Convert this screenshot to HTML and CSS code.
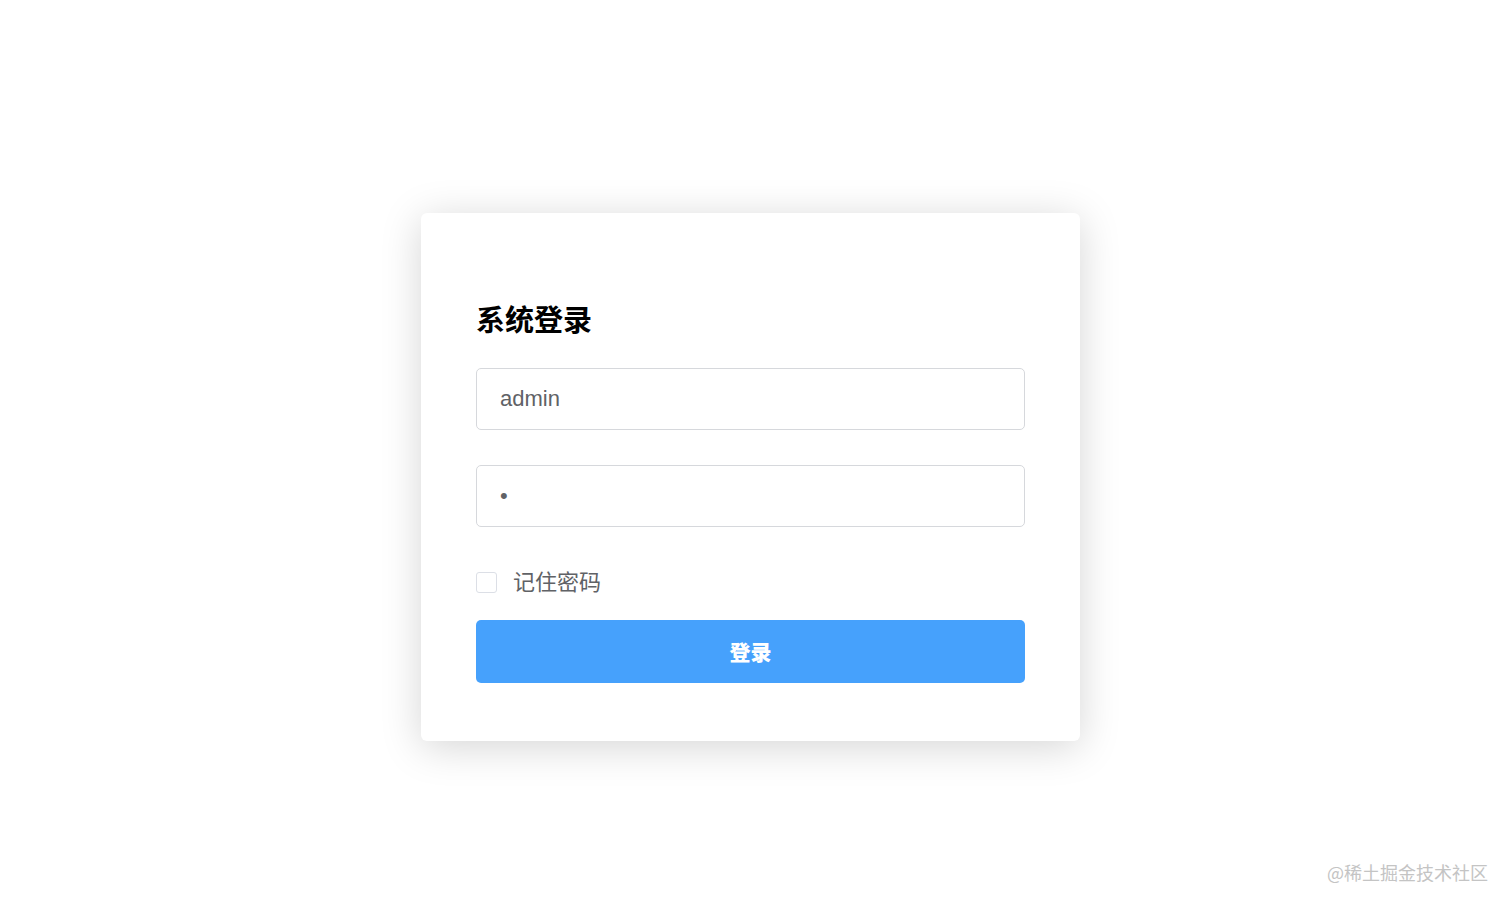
FILE: index.html
```html
<!DOCTYPE html>
<html lang="zh-CN">
<head>
    <meta charset="UTF-8">
    <meta name="viewport" content="width=device-width, initial-scale=1.0">
    <title>系统登录</title>
    <link rel="stylesheet" href="styles.css">
</head>
<body>
    <div class="page">
        <form class="login-card" name="loginForm">
            <h3 class="login-title">系统登录</h3>
            <div class="form-item">
                <input class="input" type="text" name="username" value="admin">
            </div>
            <div class="form-item">
                <input class="input" type="password" name="password" value="1">
            </div>
            <label class="remember">
                <span class="checkbox"></span>
                <span class="remember-text">记住密码</span>
            </label>
            <button type="button" class="btn-login">登录</button>
        </form>
    </div>
    <div class="watermark">@稀土掘金技术社区</div>
</body>
</html>
```

FILE: styles.css
```css
body {
    margin: 0;
    padding: 0;
    background: #fff;
    font-family: "Liberation Sans", "Noto Sans CJK SC", sans-serif;
    height: 100vh;
    overflow: hidden;
}

.page {
    padding: 213px 0 0 421px;
}

.login-card {
    width: 549px;
    padding: 55px 55px 58px;
    background: #fff;
    border-radius: 6px;
    box-shadow: 0 6px 40px rgba(0, 0, 0, 0.17);
}

.login-title {
    margin: 0 0 30px;
    padding-top: 36px;
    font-size: 29px;
    line-height: 34px;
    font-weight: bold;
    color: #000;
}

.form-item {
    margin-bottom: 35px;
}

.input {
    display: block;
    width: 100%;
    height: 62px;
    box-sizing: border-box;
    padding: 0 23px;
    border: 1px solid #d6d8dc;
    border-radius: 5px;
    font-family: "Liberation Sans", sans-serif;
    font-size: 22px;
    color: #606266;
    outline: none;
}

.input[type="password"] {
    font-size: 22px;
    letter-spacing: 1px;
}

.remember {
    display: flex;
    align-items: center;
    margin-top: 44px;
    height: 22px;
    cursor: pointer;
}

.checkbox {
    width: 19px;
    height: 19px;
    border: 1px solid #dcdfe6;
    border-radius: 3px;
    background: #fff;
}

.remember-text {
    margin-left: 16px;
    padding-bottom: 5px;
    font-size: 22px;
    color: #606266;
}

.btn-login {
    display: block;
    width: 100%;
    height: 63px;
    margin-top: 27px;
    padding-bottom: 3px;
    border: none;
    border-radius: 5px;
    background: #46a1fc;
    color: #fff;
    font-family: "Noto Sans CJK SC", sans-serif;
    font-size: 21px;
    font-weight: 900;
    cursor: pointer;
}

.watermark {
    position: absolute;
    right: 24px;
    bottom: 23px;
    font-family: "Noto Sans CJK SC", sans-serif;
    font-size: 18px;
    color: #c4c4c4;
}
```
